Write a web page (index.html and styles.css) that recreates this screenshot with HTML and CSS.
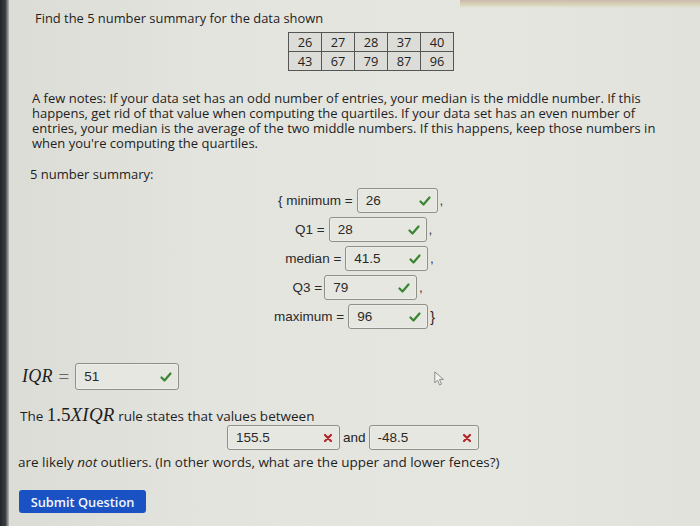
FILE: index.html
```html
<!DOCTYPE html>
<html>
<head>
<meta charset="utf-8">
<link rel="stylesheet" href="styles.css">
</head>
<body>
<div class="screen">
  <div class="edge"></div>
  <div class="topstrip"></div>
  <main class="page">
    <div class="q-head">
      <p class="prompt">Find the 5 number summary for the data shown</p>
      <table class="data">
        <tr><td>26</td><td>27</td><td>28</td><td>37</td><td>40</td></tr>
        <tr><td>43</td><td>67</td><td>79</td><td>87</td><td>96</td></tr>
      </table>
    </div>
    <p class="notes">A few notes: If your data set has an odd number of entries, your median is the middle number. If this happens, get rid of that value when computing the quartiles. If your data set has an even number of entries, your median is the average of the two middle numbers. If this happens, keep those numbers in when you're computing the quartiles.</p>
    <p class="label5">5 number summary:</p>
    <div class="summary">
      <div class="row r-min"><span class="lab">{ minimum =</span><span class="box w81"><span class="val">26</span><svg class="ok" viewBox="0 0 12 10"><path d="M1.5 5.5 L4.5 8.5 L10.5 1.5"/></svg></span><span class="punct">,</span></div>
      <div class="row r-q1"><span class="lab">Q1 =</span><span class="box w98"><span class="val">28</span><svg class="ok" viewBox="0 0 12 10"><path d="M1.5 5.5 L4.5 8.5 L10.5 1.5"/></svg></span><span class="punct">,</span></div>
      <div class="row r-med"><span class="lab">median =</span><span class="box w83"><span class="val">41.5</span><svg class="ok" viewBox="0 0 12 10"><path d="M1.5 5.5 L4.5 8.5 L10.5 1.5"/></svg></span><span class="punct">,</span></div>
      <div class="row r-q3"><span class="lab">Q3 =</span><span class="box w93"><span class="val">79</span><svg class="ok" viewBox="0 0 12 10"><path d="M1.5 5.5 L4.5 8.5 L10.5 1.5"/></svg></span><span class="punct">,</span></div>
      <div class="row r-max"><span class="lab">maximum =</span><span class="box w80"><span class="val">96</span><svg class="ok" viewBox="0 0 12 10"><path d="M1.5 5.5 L4.5 8.5 L10.5 1.5"/></svg></span><span class="punct brace">}</span></div>
    </div>
    <div class="iqr">
      <span class="math">IQR</span><span class="eq">=</span>
      <span class="box w104"><span class="val">51</span><svg class="ok" viewBox="0 0 12 10"><path d="M1.5 5.5 L4.5 8.5 L10.5 1.5"/></svg></span>
    </div>
    <p class="rule">The <span class="mathnum">1.5</span><span class="math big">XIQR</span> rule states that values between</p>
    <div class="fences">
      <span class="box w113"><span class="val">155.5</span><svg class="bad" viewBox="0 0 10 10"><path d="M2 2 L8 8 M8 2 L2 8"/></svg></span>
      <span class="and">and</span>
      <span class="box w110"><span class="val">-48.5</span><svg class="bad" viewBox="0 0 10 10"><path d="M2 2 L8 8 M8 2 L2 8"/></svg></span>
    </div>
    <p class="likely">are likely <em>not</em> outliers. (In other words, what are the upper and lower fences?)</p>
    <button class="submit">Submit Question</button>
  </main>
  <svg class="cursor" viewBox="0 0 14 20"><path d="M1 1 L1 15 L4.5 11.5 L7 17.5 L9.5 16.5 L7 10.5 L12 10.5 Z"/></svg>
</div>
</body>
</html>
```
FILE: styles.css
```css
html, body {
  margin: 0;
  padding: 0;
}
body {
  width: 700px;
  height: 526px;
  overflow: hidden;
  background: #e3e3dd;
}
.screen {
  position: relative;
  width: 700px;
  height: 526px;
  background: linear-gradient(90deg, #dcdcd6 0%, #e4e4de 30%, #e6e6e0 70%, #e2e2dc 100%);
  font-family: "Open Sans", "DejaVu Sans", sans-serif;
  color: #1e1e1e;
  overflow: hidden;
}
.edge {
  position: absolute;
  left: 0;
  top: 0;
  bottom: 0;
  width: 9px;
  background: linear-gradient(90deg, #22262a 0%, #3a3d40 60%, #b9b9b4 100%);
}
.topstrip {
  position: absolute;
  left: 460px;
  top: 0;
  right: 0;
  height: 8px;
  background: linear-gradient(180deg, #cdb9b0 0%, #d8d6b8 60%, rgba(226, 226, 210, 0) 100%);
}
.page {
  padding: 0;
}
.q-head {
  padding: 9px 0 0 35px;
}
.prompt {
  margin: 0;
  font-size: 12.9px;
  line-height: 18px;
}
.data {
  border-collapse: collapse;
  margin: 5px 0 0 253px;
  background: #dcdcd8;
}
.data td {
  border: 1px solid #555;
  width: 32px;
  height: 18px;
  padding: 0;
  text-align: center;
  font-size: 12.8px;
  line-height: 18px;
}
.notes {
  margin: 20px 0 0 32px;
  width: 648px;
  font-size: 13px;
  line-height: 15px;
}
.label5 {
  margin: 15px 0 0 30px;
  font-size: 13px;
  line-height: 16px;
}
.summary {
  margin: 6px 0 0 0;
  display: flex;
  flex-direction: column;
  align-items: center;
  gap: 4px;
  padding-left: 15px;
  font-family: "Liberation Sans", Arial, sans-serif;
  font-size: 13.5px;
}
.row {
  display: flex;
  align-items: center;
  height: 25px;
}
.r-min { margin-left: 6px; }
.r-q1 { margin-left: 12px; }
.r-med { margin-left: 4px; }
.r-q3 { margin-left: 0px; }
.r-max { margin-left: -6px; }
.lab {
  margin-right: 4px;
  color: #2a2a2a;
}
.r-q3 .lab { margin-right: 2px; }
.punct {
  margin-left: 2px;
  font-size: 12px;
}
.brace { font-size: 14px; }
.box {
  box-sizing: border-box;
  height: 25px;
  display: inline-flex;
  align-items: center;
  justify-content: space-between;
  border: 1px solid #8d9186;
  border-radius: 3px;
  background: #e6e7e1;
  padding: 0 6px 0 8px;
  font-family: "Liberation Sans", Arial, sans-serif;
  font-size: 13.5px;
  color: #2a2a2a;
  box-shadow: inset 0 0 0 1px rgba(255,255,255,0.25);
}
.w80 { width: 80px; }
.w81 { width: 81px; }
.w83 { width: 83px; }
.w93 { width: 93px; }
.w98 { width: 98px; }
.w104 { width: 104px; }
.w110 { width: 110px; }
.w113 { width: 113px; }
.ok {
  width: 12px;
  height: 10px;
  fill: none;
  stroke: #3a8531;
  stroke-width: 2.2;
  stroke-linecap: round;
  stroke-linejoin: round;
}
.bad {
  width: 10px;
  height: 10px;
  fill: none;
  stroke: #b5262a;
  stroke-width: 2.2;
  stroke-linecap: round;
}
.iqr {
  margin: 34px 0 0 22px;
  display: flex;
  align-items: center;
  height: 27px;
}
.iqr .box { height: 27px; }
.math {
  font-family: "Liberation Serif", "Times New Roman", serif;
  font-style: italic;
  font-size: 18px;
  letter-spacing: 0.2px;
}
.math.big {
  font-size: 19px;
}
.mathnum {
  font-family: "Liberation Serif", "Times New Roman", serif;
  font-size: 19px;
}
.eq {
  font-family: "Liberation Serif", serif;
  font-size: 19px;
  margin: 0 6px 0 6px;
  color: #666;
}
.rule {
  margin: 16px 0 0 20px;
  font-size: 13.5px;
  line-height: 18px;
}
.fences {
  margin: 0 0 0 227px;
  display: flex;
  align-items: center;
  height: 25px;
}
.and {
  font-family: "Liberation Sans", Arial, sans-serif;
  font-size: 13.5px;
  margin: 0 3px 0 3px;
}
.likely {
  margin: 3px 0 0 18px;
  font-size: 13.5px;
  line-height: 18px;
}
.submit {
  display: block;
  margin: 19px 0 0 19px;
  width: 127px;
  height: 23px;
  border: none;
  border-radius: 3px;
  background: #1a52c4;
  color: #f4f6fb;
  font-family: "Open Sans", "DejaVu Sans", sans-serif;
  font-size: 12.8px;
  font-weight: 600;
  padding: 0;
}
.cursor {
  position: absolute;
  left: 434px;
  top: 371px;
  width: 11px;
  height: 16px;
  fill: #f2f2ee;
  stroke: #777;
  stroke-width: 1;
}
```
